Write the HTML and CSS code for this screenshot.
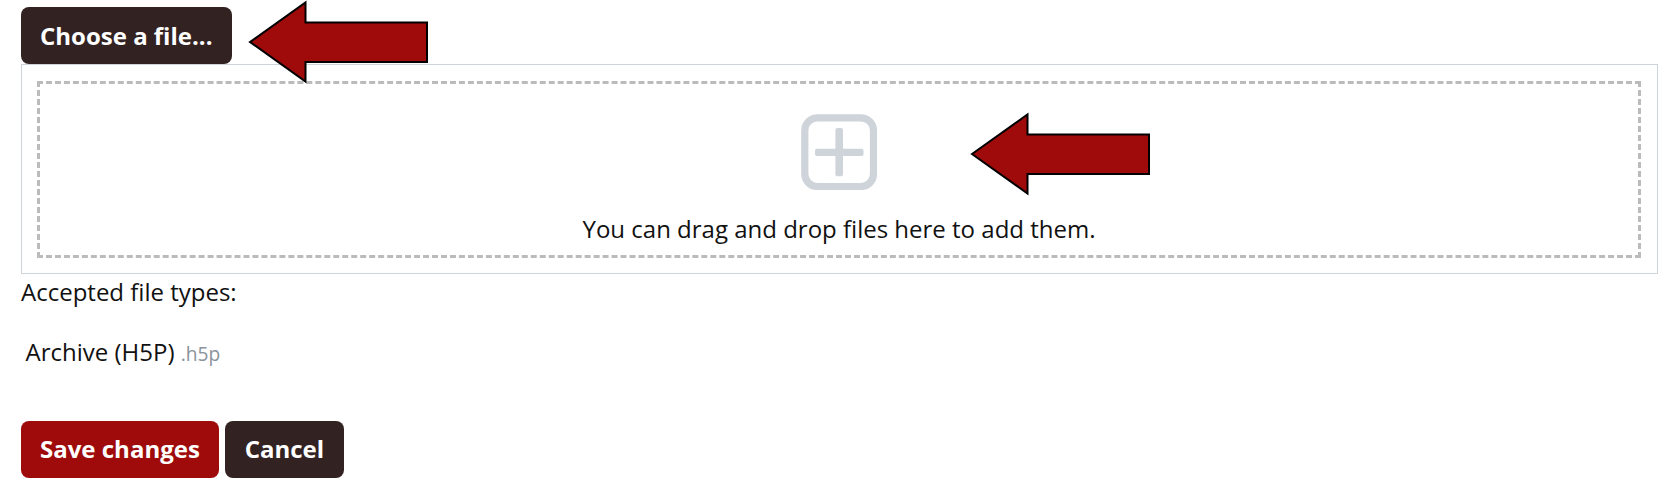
FILE: index.html
```html
<!DOCTYPE html>
<html lang="en">
<head>
<meta charset="utf-8">
<title>File upload</title>
<link rel="stylesheet" href="styles.css">
</head>
<body>
<main class="form">
  <button class="btn btn-dark" type="button">Choose a file...</button>
  <div class="filemanager">
    <div class="dropzone">
      <svg class="plus" width="76" height="76" viewBox="0 0 76 76">
        <rect x="3.8" y="3.8" width="68.7" height="68.7" rx="12.5" fill="none" stroke="#ced4da" stroke-width="7.2"/>
        <rect x="14" y="34.7" width="48.5" height="7.2" rx="2" fill="#ced4da"/>
        <rect x="34.4" y="14" width="7.6" height="48.3" rx="2" fill="#ced4da"/>
      </svg>
      <p class="hint">You can drag and drop files here to add them.</p>
    </div>
  </div>
  <p class="label">Accepted file types:</p>
  <p class="type">Archive (H5P) <small class="ext">.h5p</small></p>
  <div class="actions">
    <button class="btn btn-red" type="button">Save changes</button>
    <button class="btn btn-dark btn-cancel" type="button">Cancel</button>
  </div>
</main>
<svg class="arrow arrow-button" width="182" height="86" viewBox="0 0 182 86"><path d="M3 43 L58.5 3.5 V23.5 H180 V63 H58.5 V82.5 Z"/></svg>
<svg class="arrow arrow-drop" width="182" height="86" viewBox="0 0 182 86"><path d="M3 43 L58.5 3.5 V23.5 H180 V63 H58.5 V82.5 Z"/></svg>
</body>
</html>
```

FILE: styles.css
```css
* { box-sizing: border-box; }
body {
  margin: 0;
  height: 487px;
  overflow: hidden;
  position: relative;
  background: #fff;
  color: #111;
  font: 400 24px/36px "Open Sans", "Noto Sans", sans-serif;
}
p { margin: 0; }
.form {
  display: flex;
  flex-direction: column;
  align-items: flex-start;
  padding: 7px 6px 0 21px;
}
.btn {
  height: 57px;
  padding: 0 19px;
  border: 0;
  border-radius: 8px;
  color: #fff;
  font: 700 24px/57px "Open Sans", "Noto Sans", sans-serif;
  white-space: nowrap;
}
.btn-dark { background: #332222; }
.btn-red { background: #9f0b0b; }
.btn-cancel { width: 119px; }
.filemanager {
  width: 1637px;
  height: 210px;
  padding: 16px 16px 15px 15px;
  border: 1px solid #ced4da;
}
.dropzone {
  height: 177px;
  border: 3px dashed #bbb;
  display: flex;
  flex-direction: column;
  align-items: center;
  padding-top: 30px;
}
.plus { flex: none; }
.hint { margin-top: 21px; white-space: nowrap; }
.type { height: 36px; margin: 24px 0 0 4.5px; }
.ext { color: #8a939c; font-size: 19.2px; line-height: 1; }
.actions { display: flex; gap: 6px; margin-top: 51px; }
.actions .btn { line-height: 55px; padding-bottom: 2px; }
.arrow { position: absolute; }
.arrow path { fill: #9f0b0b; stroke: #000; stroke-width: 2; }
.arrow-button { left: 247px; top: -1px; }
.arrow-drop { left: 969px; top: 111px; }
```
